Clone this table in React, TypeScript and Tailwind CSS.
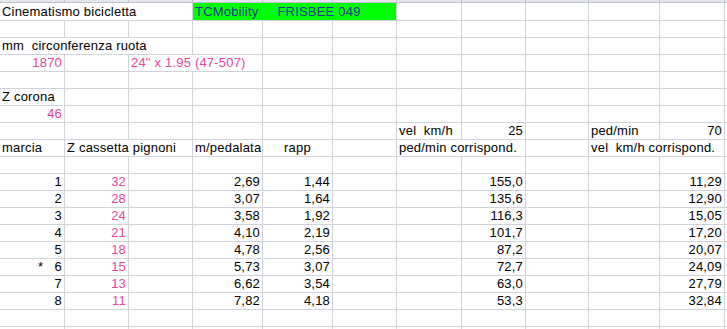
import React from "react";

type Cell = {
  span?: 1 | 2 | 3;
  text?: string;
  align?: "l" | "r" | "c";
  tone?: "pink" | "navy";
  green?: boolean;
};

// column widths taken from the sheet (last one fills the rest)
const GRID =
  "grid grid-cols-[65px_64px_64px_70px_70px_64px_65px_64px_63px_71px_65px_1fr]";

const SPAN: Record<number, string> = {
  1: "",
  2: "col-span-2",
  3: "col-span-3",
};

// build a 12 column row from [startColumn, cell] pairs
const row = (...cells: [number, Cell][]): Cell[] => {
  const out: Cell[] = [];
  let col = 0;
  for (const [start, cell] of cells) {
    while (col < start) {
      out.push({});
      col++;
    }
    out.push(cell);
    col += cell.span || 1;
  }
  while (col < 12) {
    out.push({});
    col++;
  }
  return out;
};

const gears = [
  ["1", "32", "2,69", "1,44", "155,0", "11,29"],
  ["2", "28", "3,07", "1,64", "135,6", "12,90"],
  ["3", "24", "3,58", "1,92", "116,3", "15,05"],
  ["4", "21", "4,10", "2,19", "101,7", "17,20"],
  ["5", "18", "4,78", "2,56", "87,2", "20,07"],
  ["*   6", "15", "5,73", "3,07", "72,7", "24,09"],
  ["7", "13", "6,62", "3,54", "63,0", "27,79"],
  ["8", "11", "7,82", "4,18", "53,3", "32,84"],
];

const rows: Cell[][] = [
  row(
    [0, { span: 3, text: "Cinematismo bicicletta" }],
    [3, { span: 3, text: "TCMobility     FRISBEE 049", tone: "navy", green: true }]
  ),
  row(),
  row([0, { span: 3, text: "mm  circonferenza ruota" }]),
  row(
    [0, { text: "1870", align: "r", tone: "pink" }],
    [2, { span: 2, text: '24" x 1.95 (47-507)', tone: "pink" }]
  ),
  row(),
  row([0, { text: "Z corona" }]),
  row([0, { text: "46", align: "r", tone: "pink" }]),
  row(
    [6, { text: "vel  km/h" }],
    [7, { text: "25", align: "r" }],
    [9, { text: "ped/min" }],
    [10, { text: "70", align: "r" }]
  ),
  row(
    [0, { text: "marcia" }],
    [1, { span: 2, text: "Z cassetta pignoni" }],
    [3, { text: "m/pedalata" }],
    [4, { text: "rapp", align: "c" }],
    [6, { span: 2, text: "ped/min corrispond." }],
    [9, { span: 2, text: "vel  km/h corrispond." }]
  ),
  row(),
  ...gears.map((g) =>
    row(
      [0, { text: g[0], align: "r" }],
      [1, { text: g[1], align: "r", tone: "pink" }],
      [3, { text: g[2], align: "r" }],
      [4, { text: g[3], align: "r" }],
      [7, { text: g[4], align: "r" }],
      [10, { text: g[5], align: "r" }]
    )
  ),
  row(),
  row(),
];

const SheetCell: React.FC<{ cell: Cell; first: boolean }> = ({ cell, first }) => {
  const align =
    cell.align === "r"
      ? "justify-end"
      : cell.align === "c"
      ? "justify-center"
      : "justify-start";
  const color =
    cell.tone === "pink"
      ? "text-[#e2479c]"
      : cell.tone === "navy"
      ? "text-[#1b3590]"
      : "text-black";
  return (
    <div
      className={`${SPAN[cell.span || 1]} ${first ? "h-[18px]" : "h-[17px]"} ${
        cell.green ? "bg-[#00ff00]" : "bg-white"
      } flex items-end ${align} border-r border-b border-[#d0d3d9] px-[2px] overflow-visible`}
    >
      {cell.text && (
        <span className={`${color} whitespace-pre leading-[16px]`}>{cell.text}</span>
      )}
    </div>
  );
};

export default function App() {
  return (
    <div
      className="h-[329px] w-[727px] overflow-hidden bg-white flex text-[13px] tracking-[0.2px]"
      style={{ fontFamily: '"Liberation Sans", Arial, sans-serif' }}
    >
      {/* row header edge */}
      <div className="w-[1px] flex flex-col">
        <div className="h-[3px] bg-[#c8ccd4]" />
        <div className="h-[18px] bg-[#f2c46a]" />
        <div className="flex-1 bg-[#c6cad1]" />
      </div>

      <div className="flex-1 flex flex-col">
        {/* bottom of column headers */}
        <div className={GRID}>
          {Array.from({ length: 12 }).map((_, i) => (
            <div
              key={i}
              className="h-[3px] bg-[#e4e7ed] border-r border-b border-[#bcc1ca]"
            />
          ))}
        </div>

        {rows.map((r, ri) => (
          <div key={ri} className={GRID}>
            {r.map((c, ci) => (
              <SheetCell key={ci} cell={c} first={ri === 0} />
            ))}
          </div>
        ))}
      </div>
    </div>
  );
}
